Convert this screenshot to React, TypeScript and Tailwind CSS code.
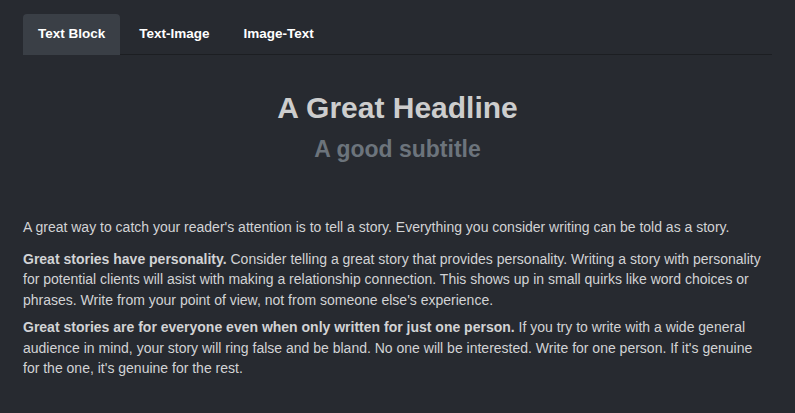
import React, { useState } from 'react';

const tabs = ['Text Block', 'Text-Image', 'Image-Text'];

export default function App() {
  const [active, setActive] = useState(0);

  return (
    <div
      className="min-h-[413px] w-full bg-[#272a30] text-[#d2d3d5]"
      style={{ fontFamily: '"Liberation Sans", Arial, sans-serif' }}
    >
      <div className="mx-[23px] pt-[14px]">
        <ul className="flex gap-[4px] border-b border-[#1c1e22]">
          {tabs.map((t, i) => (
            <li key={t} className="-mb-px">
              <button
                onClick={() => setActive(i)}
                className={
                  'block h-[41px] rounded-t-[4px] px-[15px] text-[13.5px] font-bold text-white ' +
                  (i === active ? 'bg-[#3a3f46]' : 'bg-transparent')
                }
              >
                {t}
              </button>
            </li>
          ))}
        </ul>

        <div className="pt-[36px] text-center">
          <h1 className="text-[30px] font-bold leading-[34px] text-[#cdcdcd]">A Great Headline</h1>
          <h2 className="mt-[11px] text-[23px] font-bold leading-[26px] text-[#6c747c]">A good subtitle</h2>
        </div>

        <div className="pt-[55px] text-[14px] leading-[20.5px]">
          <p className="mb-[11px]">
            A great way to catch your reader's attention is to tell a story. Everything you consider writing can be
            told as a story.
          </p>
          <p className="mb-[7px]">
            <strong>Great stories have personality.</strong> Consider telling a great story that provides personality.
            Writing a story with personality for potential clients will asist with making a relationship connection.
            This shows up in small quirks like word choices or phrases. Write from your point of view, not from someone
            else's experience.
          </p>
          <p>
            <strong>Great stories are for everyone even when only written for just one person.</strong> If you try to
            write with a wide general audience in mind, your story will ring false and be bland. No one will be
            interested. Write for one person. If it's genuine for the one, it's genuine for the rest.
          </p>
        </div>
      </div>
    </div>
  );
}
